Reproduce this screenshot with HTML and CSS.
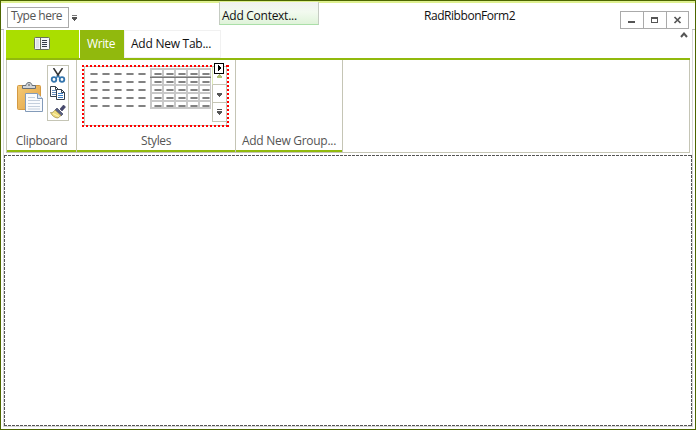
FILE: index.html
```html
<!DOCTYPE html>
<html lang="en">
<head>
<meta charset="utf-8">
<title>RadRibbonForm2</title>
<link rel="stylesheet" href="styles.css">
</head>
<body>
<div class="window">
  <header class="titlebar">
    <div class="quick"><span class="t-type">Type here</span></div>
    <svg class="overflow" width="5" height="7" shape-rendering="crispEdges"><path d="M0 0h5v1H0z" fill="#777"/><path d="M0 2h5v2H4v1H3v1H2V5H1V4H0z" fill="#555"/></svg>
    <div class="context"><span class="t-context">Add Context...</span></div>
    <h1 class="title"><span class="t-title">RadRibbonForm2</span></h1>
    <div class="controls">
      <button><svg width="22" height="16" shape-rendering="crispEdges"><path d="M7 9h7v2H7z" fill="#555"/></svg></button>
      <button><svg width="22" height="16" shape-rendering="crispEdges"><path d="M7 5h7v6H7zM8 7v3h5V7z" fill="#555" fill-rule="evenodd"/></svg></button>
      <button><svg width="21" height="16"><path d="M7.500 5l6 6M13.500 5l-6 6" stroke="#555" stroke-width="1.700"/></svg></button>
    </div>
  </header>
  <div class="frame">
    <nav class="tabs">
      <button class="app"><svg width="16" height="13"><rect x=".5" y=".5" width="15" height="12" rx="1" fill="#f4f6f8" stroke="#68705c"/><path d="M6.500 1v11" stroke="#68705c"/><path d="M2 2h3v9H2z" fill="#e0e3e8"/><path d="M8 3.500h5M8 5.500h5M8 7.500h5M8 9.500h5" stroke="#333b48"/></svg></button>
      <button class="tab active"><span class="t-write">Write</span></button>
      <button class="tab add"><span class="t-tab">Add New Tab...</span></button>
      <svg class="collapse" width="8" height="6"><path d="M1 5l3-3.500L7 5" fill="none" stroke="#555" stroke-width="2"/></svg>
    </nav>
    <main class="ribbon">
      <section class="group clipboard">
        <div class="tools">
          <svg class="paste" width="27" height="31" viewBox="0 0 27 31">
            <defs><linearGradient id="board" x2="1" y2="1"><stop stop-color="#f4ca78"/><stop offset="1" stop-color="#e2a343"/></linearGradient></defs>
            <rect x=".5" y="3.500" width="23" height="24" rx="1" fill="url(#board)" stroke="#d49a43"/>
            <path d="M5.500 3.500H9c0-4 6-4 6 0h3.500v3h-13z" fill="#d2d6da" stroke="#687078"/><path d="M11 3h2" stroke="#555"/>
            <path d="M8.500 11.500h12l5 5v13h-17z" fill="#f9fbfe" stroke="#839bb9"/><path d="M20.500 11.500v5h5" fill="#dce6f1" stroke="#839bb9"/>
            <path d="M11 15.500h7M11 18.500h12M11 21.500h12M11 24.500h12M11 27h12" stroke="#c4cfdd"/>
          </svg>
          <div class="small-tools">
            <svg width="16" height="16" viewBox="0 0 16 16"><path d="M3.500 0l5.500 8.500M12.500 0L7 8.500" stroke="#333" stroke-width="1.500"/><ellipse cx="4" cy="11.500" rx="2.300" ry="2.300" fill="none" stroke="#3475ad" stroke-width="1.800"/><ellipse cx="12" cy="11.500" rx="2.300" ry="2.300" fill="none" stroke="#3475ad" stroke-width="1.800"/><path d="M6 10l2-2 2 2" fill="none" stroke="#3475ad" stroke-width="1.500"/></svg>
            <svg width="16" height="16" viewBox="0 0 16 16"><path d="M.5.5h5l3 3v7h-8zM5.500.5v3h3" fill="#fff" stroke="#34404d"/><path d="M2 4.500h4M2 6.500h4M2 8.500h4" stroke="#668ebc"/><path d="M6.500 3.500h5l3 3v7h-8zM11.500 3.500v3h3" fill="#fff" stroke="#34404d"/><path d="M8 7.500h5M8 9.500h5M8 11.500h5" stroke="#3d7fc4"/></svg>
            <svg width="16" height="16" viewBox="0 0 16 16"><path d="M10 5l3.500-4L15.500 3 12 7z" fill="#44476d" stroke="#333455" stroke-width=".6"/><path d="M7 4l6 6-2 2-6-6z" fill="#596083" stroke="#363952" stroke-width=".6"/><path d="M5 6l6 5.500L8 14C5 14 2 12 .5 8.500 2.500 9 3.500 8 5 6z" fill="#eedb7b" stroke="#9a8648" stroke-width=".7"/><path d="M3 9.500l6 3" stroke="#fff4b8"/></svg>
          </div>
        </div>
        <footer><span class="t-clip">Clipboard</span></footer>
      </section>
      <section class="group styles">
        <div class="gallery">
          <svg class="selection" width="147" height="62"><path d="M0 1h147M0 61h147M1 0v62M146 0v62"/></svg>
          <svg class="items" width="122" height="41" shape-rendering="crispEdges">
            <defs>
              <pattern id="dash" width="12" height="8" patternUnits="userSpaceOnUse"><path d="M0 0h8v2H0z" fill="#b8b8b8"/><path d="M1 0h6v2H1z" fill="#828282"/></pattern>
              <pattern id="cell" width="12" height="8" patternUnits="userSpaceOnUse"><path d="M0 0h12v2H2v6H0z" fill="#c8c8c8"/></pattern>
            </defs>
            <g transform="translate(1 5)"><rect width="56" height="34" fill="url(#dash)"/></g>
            <g transform="translate(61 0)"><rect width="61" height="41" fill="url(#cell)"/><path d="M0 39h61v2H0zM60 0h1v41h-1z" fill="#c8c8c8"/><path d="M0 8h61v1H0z" fill="#aaa"/><path d="M0 9h61v1H0z" fill="#777"/></g>
            <g transform="translate(65 5)"><rect width="56" height="34" fill="url(#dash)"/></g>
          </svg>
          <div class="scroll">
            <div class="up"><svg width="5" height="4"><path d="M2 0h1v1h1v1h1v2H0V2h1V1h1z" fill="#afbf76"/></svg></div>
            <div class="down"><svg width="5" height="4"><path d="M0 0h5v2H4v1H3v1H2V3H1V2H0z" fill="#555"/></svg></div>
            <div><svg width="5" height="6"><path d="M0 0h5v1H0zM0 2h5v2H4v1H3v1H2V5H1V4H0z" fill="#555"/></svg></div>
          </div>
          <svg class="smart-tag" width="10" height="11" shape-rendering="crispEdges"><path d="M.5.5h9v10h-9z" fill="#fff" stroke="#000"/><path d="M4 2h1v1h1v1h1v2H6v1H5v1H4z"/></svg>
        </div>
        <footer><span class="t-styles">Styles</span></footer>
      </section>
      <section class="group add-group"><footer><span class="t-group">Add New Group...</span></footer></section>
    </main>
    <div class="canvas"><svg width="688" height="271" shape-rendering="crispEdges"><path d="M0 .5h688M0 270.500h688M.5 0v271M687.500 0v271"/></svg></div>
  </div>
</div>
</body>
</html>
```
FILE: styles.css
```css
* { box-sizing: border-box; }
body { margin: 0; font: 12px/16px "Open Sans", "Noto Sans", sans-serif; color: #555; background: #fff; }
button { border: 0; padding: 0; margin: 0; background: none; font: inherit; color: inherit; }
svg { display: block; flex: none; }
span { white-space: nowrap; }
.t-type { letter-spacing: -.5px; }
.t-context { letter-spacing: -.27px; }
.t-title { letter-spacing: -.45px; }
.t-write { letter-spacing: -.4px; }
.t-tab { letter-spacing: -.25px; }
.t-clip { letter-spacing: -.35px; }
.t-styles { letter-spacing: -.4px; }
.t-group { letter-spacing: -.28px; }
.window { width: 696px; height: 430px; border: 1px solid #4d6600; background: #fff; }
.titlebar { height: 28px; display: flex; border-top: 2px solid #def08f; }
.quick { width: 62px; height: 21px; margin: 4px 0 0 6px; border: 1px solid #aaa; padding: 0 0 0 3px; }
.overflow { margin: 12px 0 0 3px; }
.context { width: 100px; height: 23px; margin: -1px 0 0 142px; padding: 6px 0 0 2px; color: #111; border: solid #c5cbc2; border-width: 0 1px; border-bottom: 1px solid #aadfa8; background: linear-gradient(#f1f1f1, #f2faef 45%, #dff3d9); position: relative; }
.title { margin: 5px 0 0 105px; width: 196px; font: inherit; color: #111; }
.controls { margin-top: 8px; height: 18px; display: flex; border: 1px solid #aaa; width: 69px; }
.controls button + button { border-left: 1px solid #aaa; }
.frame { height: 398px; margin: 0 2px; border: 1px solid #d8d8d8; border-top: 0; position: relative; }
.frame::before, .frame::after { content: ""; position: absolute; top: 0; width: 3px; height: 1px; background: #bbb; }
.frame::before { left: -3px; }
.frame::after { right: -3px; }
.tabs { height: 31px; margin: 0 2px; padding-top: 1px; display: flex; border-bottom: 2px solid #91b90d; }
.app { width: 73px; height: 28px; background: #aade00; display: flex; align-items: flex-start; padding: 7px 0 0 28px; }
.tab { height: 28px; text-align: left; }
.active { width: 44px; margin-left: 1px; padding-left: 7px; color: #fff; background: #91b90d; }
.add { width: 97px; border: 1px solid #f1f1f1; padding-left: 6px; color: #111; }
.collapse { margin: 2px 0 0 459px; }
.ribbon { height: 93px; margin: 0 2px; display: flex; border: 1px solid #c5c5b5; border-top: 0; }
.group { height: 92px; display: flex; flex-direction: column; border-right: 1px solid #c5c5b5; }
.clipboard { width: 70px; }
.styles { width: 159px; }
.add-group { width: 107px; }
.group footer { margin-top: auto; height: 22px; padding-top: 3px; text-align: center; border-bottom: 2px solid #91b90d; }
.tools { display: flex; padding: 5px 0 0 10px; }
.paste { margin-top: 17px; }
.small-tools { width: 22px; height: 56px; margin-left: 3px; padding: 2px; border: 1px solid #c5c5b5; }
.small-tools svg { margin-bottom: 2px; }
.gallery { width: 143px; height: 60px; margin: 6px 0 0 7px; border: 1px solid #c5c5b5; position: relative; display: flex; }
.selection { position: absolute; left: -3px; top: -2px; }
.selection path { stroke: #f00; stroke-width: 2; stroke-dasharray: 2; }
.items { margin: 1px 0 0 4px; }
.scroll { width: 14px; height: 56px; margin: -1px 0 0 1px; border: 1px solid #c5c5b5; border-right: 0; }
.scroll div { height: 18px; display: flex; align-items: center; justify-content: center; border-bottom: 1px solid #c5c5b5; }
.scroll div:last-child { border: 0; }
.scroll .up { border-left: 1px solid #dce8b3; margin-left: -1px; padding-top: 1px; }
.scroll .down { padding-top: 3px; }
.smart-tag { position: absolute; left: 129px; top: -4px; }
.canvas { margin-top: 2px; height: 271px; }
.canvas path { stroke: #555; stroke-dasharray: 3 1; }
```
